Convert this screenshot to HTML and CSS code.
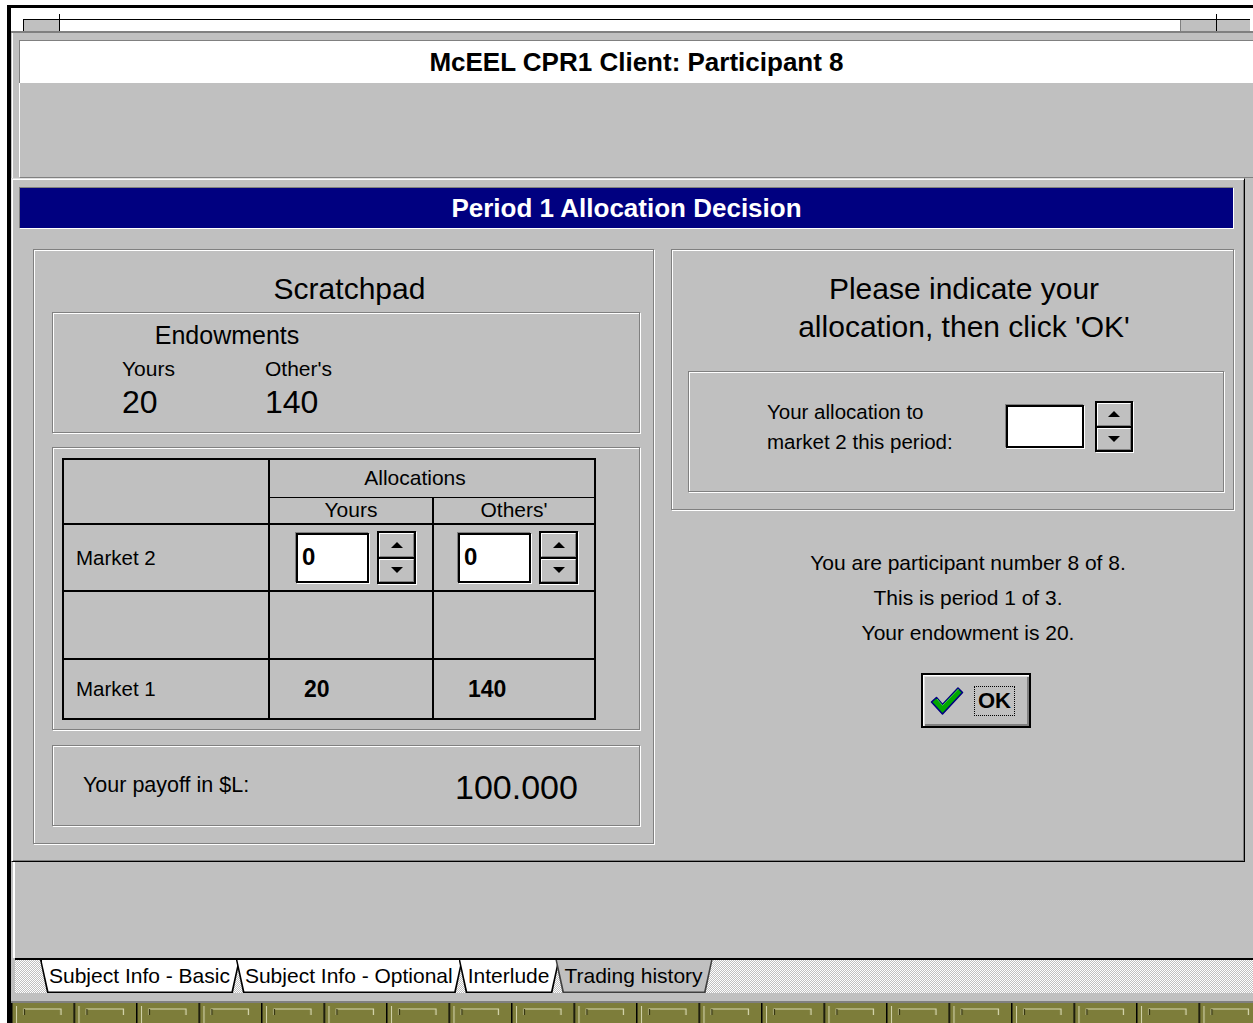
FILE: index.html
```html
<!DOCTYPE html>
<html lang="en">
<head>
<meta charset="utf-8">
<title>McEEL CPR1 Client</title>
<link rel="stylesheet" href="styles.css">
</head>
<body>
<div class="screen">
  <div class="strip">
    <div class="strip-bar">
      <span class="strip-sys"></span>
      <span class="strip-fill"></span>
      <span class="strip-btn"></span>
      <span class="strip-btn strip-btn-last"></span>
    </div>
  </div>

  <div class="frame">
    <header class="appbar">McEEL CPR1 Client: Participant 8</header>
    <div class="workspace"></div>
  </div>

  <section class="dialog">
    <h2 class="dlg-title">Period 1 Allocation Decision</h2>
    <div class="dlg-body">
      <div class="scratch etched">
        <div class="scratch-title">Scratchpad</div>

        <div class="endow etched">
          <div class="endow-head">Endowments</div>
          <div class="endow-label">Yours</div>
          <div class="endow-label">Other's</div>
          <div class="endow-val">20</div>
          <div class="endow-val">140</div>
        </div>

        <div class="alloc etched">
          <table class="grid">
            <colgroup><col class="c1"><col class="c2"><col class="c3"></colgroup>
            <tr class="r-head"><td rowspan="2"></td><th colspan="2">Allocations</th></tr>
            <tr class="r-sub"><th>Yours</th><th>Others'</th></tr>
            <tr class="r-m2">
              <td class="mkt">Market 2</td>
              <td><div class="ctl ctl-yours"><span class="field">0</span><span class="spinner"><span class="spin-btn"><i class="tri tri-up"></i></span><span class="spin-btn"><i class="tri tri-down"></i></span></span></div></td>
              <td><div class="ctl ctl-others"><span class="field">0</span><span class="spinner"><span class="spin-btn"><i class="tri tri-up"></i></span><span class="spin-btn"><i class="tri tri-down"></i></span></span></div></td>
            </tr>
            <tr class="r-gap"><td></td><td></td><td></td></tr>
            <tr class="r-m1">
              <td class="mkt">Market 1</td>
              <td class="num">20</td>
              <td class="num">140</td>
            </tr>
          </table>
        </div>

        <div class="payoff etched">
          <span class="payoff-label">Your payoff in $L:</span>
          <span class="payoff-val">100.000</span>
        </div>
      </div>

      <div class="side">
        <div class="prompt etched">
          <div class="prompt-head">Please indicate your<br>allocation, then click 'OK'</div>
          <div class="prompt-box etched">
            <div class="prompt-label">Your allocation to<br>market 2 this period:</div>
            <span class="field field-wide"></span>
            <span class="spinner spinner-tall"><span class="spin-btn"><i class="tri tri-up"></i></span><span class="spin-btn"><i class="tri tri-down"></i></span></span>
          </div>
        </div>

        <div class="info">
          <p>You are participant number 8 of 8.</p>
          <p>This is period 1 of 3.</p>
          <p>Your endowment is 20.</p>
        </div>

        <div class="ok-row">
          <button class="ok-btn" type="button">
            <svg class="check" width="34" height="30" viewBox="0 0 34 30" aria-hidden="true">
              <path d="M1.5 16 L6.5 11.5 L12.5 18.5 L28 2 L32.5 6.5 L12.5 28 Z" fill="#00a800" stroke="#000080" stroke-width="1.6" stroke-linejoin="round"/>
              <path d="M7 13 L12.5 19.5 L28.5 3" fill="none" stroke="#40d040" stroke-width="1"/>
            </svg>
            <span class="ok-label">OK</span>
          </button>
        </div>
      </div>
    </div>
  </section>

  <div class="lower"></div>

  <div class="tabstrip">
    <div class="tabrow">
      <span class="tab">Subject Info - Basic</span>
      <span class="tab">Subject Info - Optional</span>
      <span class="tab">Interlude</span>
      <span class="tab tab-current">Trading history</span>
    </div>
  </div>

  <svg class="taskbar" width="1242" height="20" aria-hidden="true">
    <defs>
      <pattern id="brick" width="62.5" height="20" patternUnits="userSpaceOnUse">
        <rect width="62.5" height="20" fill="#7d7d3a"/>
        <rect x="0" y="0" width="1.5" height="20" fill="#000"/>
        <rect x="5" y="3" width="1" height="17" fill="#d8d8b0"/>
        <path d="M13 12 V6 H50 V12" fill="none" stroke="#d8d8b0" stroke-width="1.2"/>
        <path d="M13.5 6 V12" stroke="#202000" stroke-width="1"/>
      </pattern>
    </defs>
    <rect width="1242" height="20" fill="url(#brick)"/>
  </svg>
</div>
</body>
</html>
```

FILE: styles.css
```css
* { box-sizing: border-box; }

body {
  margin: 0;
  background: #fff;
  color: #000;
  font-family: "Liberation Sans", Arial, sans-serif;
}

p { margin: 0; }

/* outer screen with the heavy black edge */
.screen {
  margin: 5px 0 0 7px;
  width: 1246px;
  height: 1018px;
  border-top: 3px solid #000;
  border-left: 4px solid #000;
  background: #c0c0c0;
  overflow: hidden;
}

/* clipped caption strip of the window behind */
.strip {
  position: relative;
  height: 25px;
  background: #fff;
  border-bottom: 2px solid #808080;
}
.strip-bar {
  position: absolute;
  left: 12px;
  right: 3px;
  top: 11px;
  bottom: 0;
  display: flex;
  border-top: 1px solid #000;
}
.strip-sys {
  position: relative;
  width: 37px;
  background: #c0c0c0;
  border-left: 1px solid #000;
}
.strip-sys::after,
.strip-btn-last::before {
  content: "";
  position: absolute;
  top: -6px;
  bottom: 0;
  width: 1px;
  background: #000;
}
.strip-sys::after { right: 0; }
.strip-fill { flex: 1; }
.strip-btn {
  position: relative;
  width: 36px;
  background: #c0c0c0;
  border-left: 1px solid #808080;
}
.strip-btn-last { width: 34px; border-left: 0; }
.strip-btn-last::before { left: 0; }

/* main application window */
.frame {
  height: 145px;
  padding: 7px 0 0 8px;
  background: linear-gradient(to right, #c0c0c0 1px, #fff 1px, #fff 2px, #c0c0c0 2px);
}
.appbar {
  height: 43px;
  background: #fff;
  border-top: 1px solid #808080;
  border-left: 1px solid #808080;
  font-weight: bold;
  font-size: 26px;
  line-height: 42px;
  text-align: center;
}
.workspace {
  height: 95px;
  border-left: 1px solid #fff;
  border-bottom: 1px solid #808080;
}

/* modal dialog */
.dialog {
  width: 1234px;
  height: 684px;
  border: 1px solid;
  border-color: #dfdfdf #000 #000 #dfdfdf;
  box-shadow: inset 1px 1px 0 #fff, inset -1px -1px 0 #808080;
  padding: 8px 10px 0 7px;
}
.dlg-title {
  margin: 0;
  height: 42px;
  border: 1px solid;
  border-color: #808080 #fff #fff #808080;
  background: #000080;
  color: #fff;
  font-weight: bold;
  font-size: 26px;
  line-height: 40px;
  text-align: center;
}
.dlg-body {
  display: flex;
  gap: 17px;
  margin-top: 20px;
  padding-left: 14px;
}

.etched {
  border: 1px solid #808080;
  box-shadow: inset 1px 1px 0 #fff, 1px 1px 0 #fff;
}

/* scratchpad column */
.scratch {
  width: 621px;
  height: 595px;
  padding: 0 13px 0 18px;
}
.scratch-title {
  margin: 22px 0 6px;
  padding-left: 7px;
  font-size: 30px;
  line-height: 34px;
  text-align: center;
}

.endow {
  height: 121px;
  display: grid;
  grid-template-columns: 143px auto;
  justify-content: start;
  align-content: start;
  padding: 7px 0 0 69px;
}
.endow-head {
  grid-column: 1 / span 2;
  font-size: 25px;
  line-height: 30px;
  text-align: center;
}
.endow-label {
  margin-top: 7px;
  font-size: 21px;
  line-height: 24px;
}
.endow-val {
  margin-top: 3px;
  font-size: 32px;
  line-height: 36px;
}

.alloc {
  height: 283px;
  margin-top: 14px;
  padding: 10px 0 0 9px;
}
.grid {
  border-collapse: collapse;
  table-layout: fixed;
  width: 532px;
}
.c1 { width: 206px; }
.c2 { width: 164px; }
.c3 { width: 162px; }
.grid td,
.grid th {
  border: 2px solid #000;
  padding: 0;
  font-weight: normal;
  font-size: 21px;
}
.r-head th {
  height: 38px;
  padding-right: 34px;
  border-bottom-width: 1px;
  text-align: center;
}
.r-sub th {
  height: 27px;
  border-top-width: 1px;
  line-height: 24px;
  text-align: center;
}
.r-m2 td { height: 67px; }
.r-gap td { height: 68px; }
.r-m1 td { height: 60px; }
.grid .mkt {
  padding-left: 12px;
  font-size: 20.5px;
}
.grid .num {
  padding-left: 34px;
  font-weight: bold;
  font-size: 23px;
}

.ctl {
  display: flex;
  align-items: center;
  gap: 8px;
}
.ctl-yours { padding-left: 26px; }
.ctl-others { padding-left: 24px; }

/* edit fields and up/down spinners */
.field {
  display: inline-block;
  width: 73px;
  height: 50px;
  background: #fff;
  border: 2px solid #000;
  box-shadow: -1px -1px 0 #808080, 1px 1px 0 #fff;
  padding-left: 4px;
  font-weight: bold;
  font-size: 24px;
  line-height: 44px;
}
.field-wide {
  width: 78px;
  height: 43px;
}
.spinner {
  display: inline-flex;
  flex-direction: column;
  gap: 2px;
  width: 39px;
  height: 53px;
  border: 2px solid #000;
  background: #000;
  box-shadow: 1px 1px 0 #fff;
}
.spinner-tall {
  width: 38px;
  height: 51px;
}
.spin-btn {
  flex: 1;
  display: flex;
  align-items: center;
  justify-content: center;
  background: #c0c0c0;
  border: 1px solid;
  border-color: #fff #808080 #808080 #fff;
}
.tri {
  width: 0;
  height: 0;
  border-left: 6px solid transparent;
  border-right: 6px solid transparent;
}
.tri-up { border-bottom: 6px solid #000; }
.tri-down { border-top: 6px solid #000; }

.payoff {
  height: 81px;
  margin-top: 15px;
  display: flex;
  align-items: center;
  padding-left: 30px;
}
.payoff-label {
  width: 372px;
  font-size: 21.5px;
}
.payoff-val {
  margin-top: 4px;
  font-size: 34px;
}

/* right column */
.side {
  width: 563px;
  display: flex;
  flex-direction: column;
}
.prompt {
  height: 261px;
  padding: 20px 9px 0 16px;
}
.prompt-head {
  padding-left: 16px;
  font-size: 30px;
  line-height: 38px;
  text-align: center;
}
.prompt-box {
  height: 121px;
  margin-top: 25px;
  display: flex;
  align-items: center;
  gap: 11px;
  padding: 0 0 10px 78px;
}
.prompt-label {
  width: 228px;
  font-size: 20.5px;
  line-height: 30px;
}

.info {
  margin-top: 35px;
  padding-left: 31px;
  font-size: 21px;
  line-height: 35px;
  text-align: center;
}

.ok-row {
  display: flex;
  justify-content: center;
  margin-top: 23px;
  padding-left: 47px;
}
.ok-btn {
  width: 110px;
  height: 55px;
  display: flex;
  align-items: center;
  gap: 10px;
  padding: 0 0 0 7px;
  border: 2px solid #000;
  background: #c0c0c0;
  box-shadow: inset 1px 1px 0 #fff, inset 2px 2px 0 #dfdfdf, inset -2px -2px 0 #808080;
  font-family: inherit;
  color: #000;
}
.ok-label {
  padding: 2px 3px;
  border: 1px dotted #000;
  font-weight: bold;
  font-size: 22px;
  line-height: 24px;
}

/* area under the dialog */
.lower {
  height: 96px;
  background: linear-gradient(to right, #c0c0c0 2px, #fff 2px, #fff 4px, #c0c0c0 4px);
}

/* sheet tabs */
.tabstrip {
  height: 45px;
  padding: 0 0 8px 4px;
  background: #c0c0c0;
  border-bottom: 2px solid #808080;
}
.tabrow {
  display: flex;
  height: 35px;
  padding-left: 25px;
  border-top: 2px solid #000;
  background: repeating-conic-gradient(#fff 0 25%, #c0c0c0 0 50%) 0 0 / 2px 2px;
}
.tab {
  position: relative;
  z-index: 0;
  margin-right: -4px;
  padding: 0 10px 0 9px;
  font-size: 21px;
  line-height: 32px;
  white-space: nowrap;
}
.tab::before,
.tab::after {
  content: "";
  position: absolute;
  z-index: -1;
  clip-path: polygon(0 0, 100% 0, calc(100% - 7px) 100%, 7px 100%);
}
.tab::before {
  inset: 0;
  background: #000;
}
.tab::after {
  inset: 0 1.5px 1.5px;
  background: #fff;
}
.tab-current::before { background: #404040; }
.tab-current::after { background: #c0c0c0; }

.taskbar { display: block; }
```
